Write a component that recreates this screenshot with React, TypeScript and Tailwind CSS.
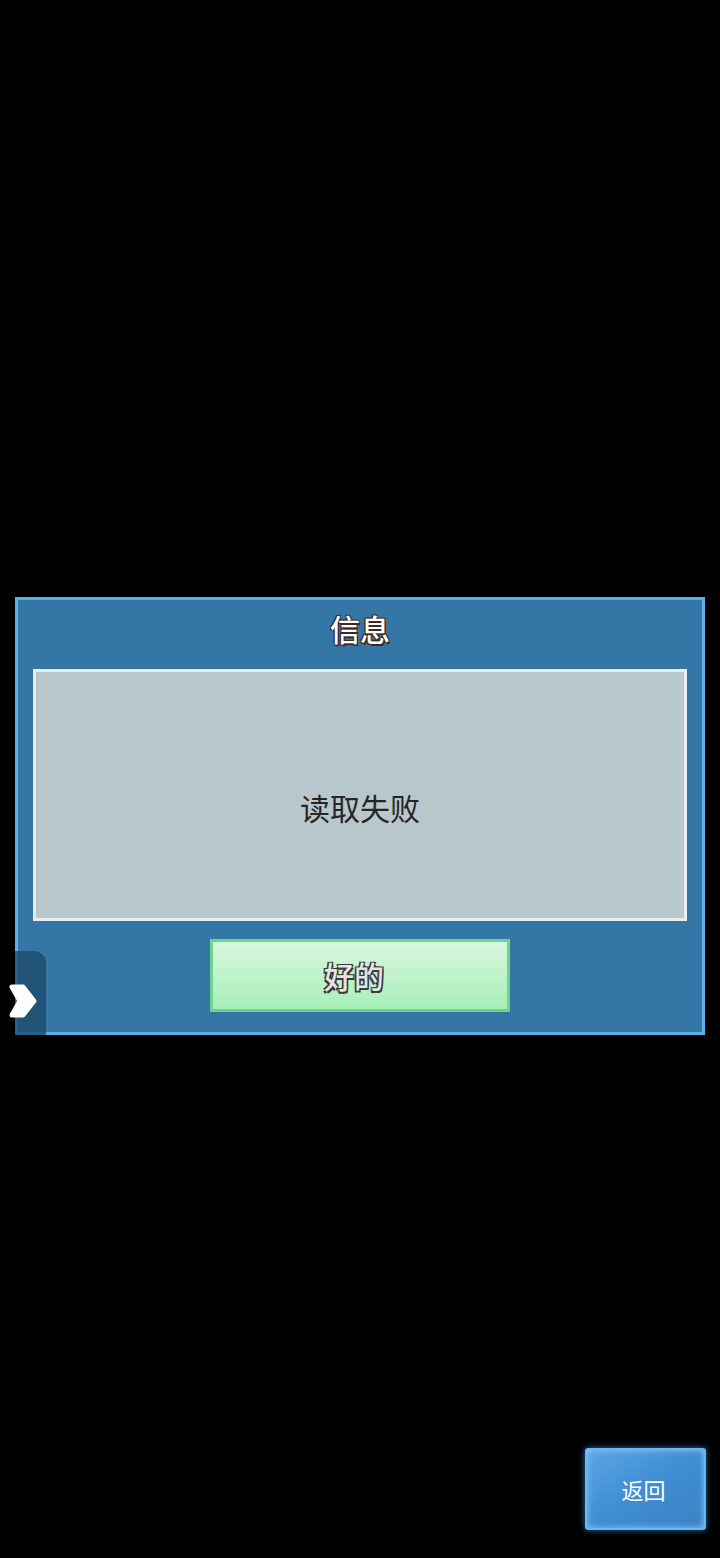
export default function App() {
  const cjk = { fontFamily: '"Noto Sans CJK SC", "Noto Sans", sans-serif' };
  return (
    <div className="flex h-[1558px] w-[720px] flex-col bg-black" style={cjk}>
      {/* message dialog */}
      <div className="relative mx-[15px] mt-[597px] flex h-[438px] w-[690px] flex-col items-center border-[3px] border-[#5cb0ea] bg-[#3477a6]">
        <div className="flex h-[69px] items-center justify-center pb-[12px] text-[30px] font-medium text-white [text-shadow:1.5px_1.5px_0_#3a2a22,-1px_-1px_0_#3a2a22,1px_-1px_0_#3a2a22,-1px_1px_0_#3a2a22]">
          信息
        </div>
        <div className="flex h-[252px] w-[654px] items-center justify-center border-[3px] border-[#e6eef0] bg-[#b8c7cc] text-[30px] text-[#262626]">
          <span className="pt-[24px]">读取失败</span>
        </div>
        <button className="mt-[18px] flex h-[73px] w-[300px] items-center justify-center border-[3px] border-[#6fd38c] bg-gradient-to-b from-[#d8f6df] to-[#a6efb9] pr-[12px] text-[30px] font-medium text-[#e4e4e4] [text-shadow:1.5px_1.5px_0_#3a3a3a,-1.5px_-1.5px_0_#3a3a3a,1.5px_-1.5px_0_#3a3a3a,-1.5px_1.5px_0_#3a3a3a]">
          好的
        </button>

        {/* side drawer tab */}
        <div className="absolute left-[-3px] top-[351px] h-[84px] w-[31px] rounded-tr-[12px] bg-[#1d4a6c]/80" />
        <svg className="absolute left-[-10px] top-[383px]" width="30" height="36" viewBox="0 0 30 36">
          <path d="M4 4 L15 4 L26 18 L15 32 L4 32 L12 18 Z" fill="#fff" stroke="#fff" strokeWidth="5" strokeLinejoin="round" />
        </svg>
      </div>

      {/* back button */}
      <button className="mr-[14px] ml-auto mt-[413px] flex h-[82px] w-[121px] items-center justify-center rounded-[3px] border-[2px] border-[#6bb6f0] bg-gradient-to-br from-[#5aa6e6] via-[#3f8dd3] to-[#3a82c4] pr-[4px] text-[22px] text-white shadow-[0_0_6px_#2c6fb0,inset_0_0_6px_#8ccaf6]">
        返回
      </button>
    </div>
  );
}
